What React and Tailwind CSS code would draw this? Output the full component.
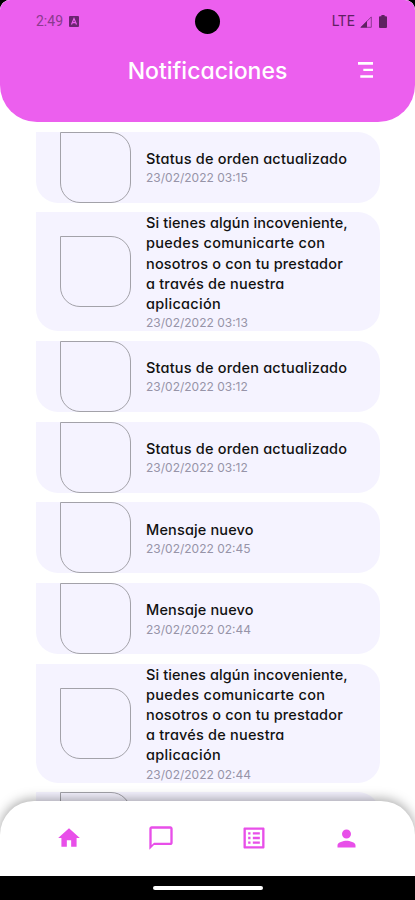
import { MdHome, MdPerson, MdChatBubbleOutline, MdOutlineListAlt } from "react-icons/md";

const long = [
  { text: "Si tienes algún incoveniente,", className: "tracking-[0.1px]" },
  { text: "puedes comunicarte con", className: "tracking-[0.3px]" },
  { text: "nosotros o con tu prestador", className: "tracking-[0.17px]" },
  { text: "a través de nuestra", className: "tracking-[0.2px]" },
  { text: "aplicación", className: "tracking-[0.3px]" },
];
const status = [{ text: "Status de orden actualizado", className: "tracking-[0.2px]" }];
const message = [{ text: "Mensaje nuevo", className: "tracking-[0.15px]" }];

const notifications = [
  { lines: status, date: "23/02/2022 03:15" },
  { lines: long, date: "23/02/2022 03:13" },
  { lines: status, date: "23/02/2022 03:12" },
  { lines: status, date: "23/02/2022 03:12" },
  { lines: message, date: "23/02/2022 02:45" },
  { lines: message, date: "23/02/2022 02:44" },
  { lines: long, date: "23/02/2022 02:44" },
  { lines: message, date: "23/02/2022 02:44" },
];

function StatusBar() {
  return (
    <div className="relative flex h-[43px] items-center justify-between pl-9 pr-[28px] font-['Roboto',sans-serif] text-[14px] text-[#5f2162]">
      <div className="flex items-center gap-[6px]">
        <span className="text-[#8b3a8e]">2:49</span>
        <svg width="10" height="11" viewBox="0 0 10 11">
          <rect width="10" height="11" rx="1" fill="#6b2470" />
          <path d="M2.5 8.5 5 2.5l2.5 6M3.5 6.7h3" fill="none" stroke="#ec5fee" strokeWidth="1.2" />
        </svg>
      </div>
      {/* Camera cutout */}
      <div className="absolute left-[195px] top-[9px] h-[25px] w-[25px] rounded-full bg-black" />
      <div className="flex items-center">
        <span className="mr-[5px] tracking-[0.4px]">LTE</span>
        <svg className="mr-[7px]" width="12" height="12" viewBox="0 0 12 12">
          <path d="M11.3.9v10.4H.9z" fill="none" stroke="#75307a" strokeWidth="0.8" />
          <path d="M7 5v6.5H.5z" fill="#5f2162" />
        </svg>
        <svg width="8" height="13" viewBox="0 0 8 13">
          <path d="M2.4 0h3.2v1.3H7q1 0 1 1V12q0 1-1 1H1q-1 0-1-1V2.3q0-1 1-1h1.4z" fill="#5f2162" />
        </svg>
      </div>
    </div>
  );
}

function Header() {
  return (
    <div className="bg-white">
      <header className="h-[121.5px] rounded-b-[37px] bg-[#ec5fee]">
        <StatusBar />
        <div className="relative flex h-[56px] items-center justify-center">
          <h1 className="text-[23px] font-medium text-white">Notificaciones</h1>
          <button className="absolute right-[42px] top-[19px]">
            <svg width="15" height="16" viewBox="0 0 15 16" fill="#fff">
              <path d="M0 0h15v2.7H0zM5.3 6.7H15v2.4H5.3zM2.3 13.2H15v2.6H2.3z" />
            </svg>
          </button>
        </div>
      </header>
    </div>
  );
}

function NotificationCard({ lines, date }) {
  return (
    <div className="flex shrink-0 items-center rounded-[22px] rounded-tl-none bg-[#f5f3ff] pl-6">
      <div className="h-[71.1px] w-[71px] shrink-0 rounded-[20px] rounded-tl-none border border-[#a3a2a9]" />
      <div className="ml-[15px] pt-[0.9px]">
        <div className="text-[14.5px] font-medium leading-[20.2px] text-[#111]">
          {lines.map((line) => (
            <p key={line.text} className="whitespace-nowrap">
              <span className={line.className}>{line.text}</span>
            </p>
          ))}
        </div>
        <p className="whitespace-nowrap text-[12px] leading-[17px] text-[#9794a8]">{date}</p>
      </div>
    </div>
  );
}

function BottomNav() {
  return (
    <nav className="absolute inset-x-0 bottom-[24px] flex h-[75.5px] items-center rounded-t-[34px] bg-white text-[#e84fe9] shadow-[0_-2px_12px_rgba(0,0,0,0.35)]">
      <div className="flex w-full items-center justify-between pl-[56px] pr-[55px]">
        <MdHome size={26} />
        <MdChatBubbleOutline size={28} />
        <MdOutlineListAlt size={28} />
        <MdPerson size={27} />
      </div>
    </nav>
  );
}

export default function App() {
  return (
    <div className="h-[900px] w-[415px] bg-black">
      <div className="relative flex h-[900px] flex-col overflow-hidden rounded-t-[10px] bg-white font-['Inter',sans-serif] [font-feature-settings:'cv11']">
        <Header />
        <main className="flex flex-1 flex-col gap-[9.65px] overflow-hidden pl-9 pr-[35px] pt-[10px]">
          {notifications.map((item, i) => (
            <NotificationCard key={i} {...item} />
          ))}
        </main>
        <BottomNav />
        <div className="absolute inset-x-0 bottom-0 flex h-[24px] justify-center bg-black pt-[10px]">
          <div className="h-1 w-[110px] rounded-full bg-white" />
        </div>
      </div>
    </div>
  );
}
